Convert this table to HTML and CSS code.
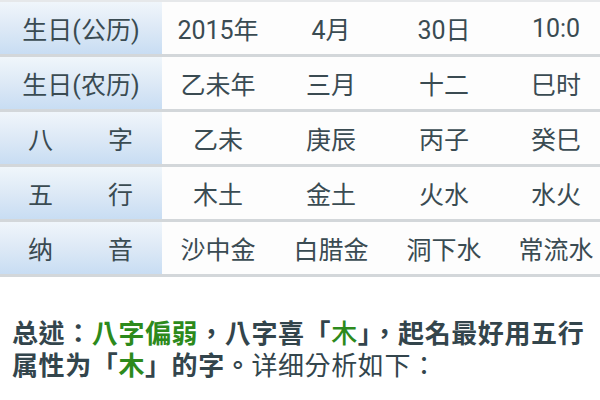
FILE: index.html
```html
<!DOCTYPE html>
<html lang="zh-CN">
<head>
<meta charset="utf-8">
<link rel="stylesheet" href="styles.css">
</head>
<body>
<div class="table">
  <div class="row">
    <div class="label">生日(公历)</div>
    <div class="cell">2015年</div>
    <div class="cell">4月</div>
    <div class="cell">30日</div>
    <div class="cell">10:0</div>
  </div>
  <div class="row">
    <div class="label">生日(农历)</div>
    <div class="cell">乙未年</div>
    <div class="cell">三月</div>
    <div class="cell">十二</div>
    <div class="cell">巳时</div>
  </div>
  <div class="row">
    <div class="label split"><span>八</span><span>字</span></div>
    <div class="cell">乙未</div>
    <div class="cell">庚辰</div>
    <div class="cell">丙子</div>
    <div class="cell">癸巳</div>
  </div>
  <div class="row">
    <div class="label split"><span>五</span><span>行</span></div>
    <div class="cell">木土</div>
    <div class="cell">金土</div>
    <div class="cell">火水</div>
    <div class="cell">水火</div>
  </div>
  <div class="row">
    <div class="label split"><span>纳</span><span>音</span></div>
    <div class="cell">沙中金</div>
    <div class="cell">白腊金</div>
    <div class="cell">洞下水</div>
    <div class="cell">常流水</div>
  </div>
</div>
<p class="summary" lang="zh-TW"><b>总述：<span class="green">八字偏弱</span>，八字喜「<span class="green light">木</span>」，起名最好用五行属性为「<span class="green">木</span>」的字。</b>详细分析如下：</p>
</body>
</html>
```

FILE: styles.css
```css
html, body {
  margin: 0;
  padding: 0;
  background: #ffffff;
  width: 600px;
  height: 400px;
  overflow: hidden;
}

body {
  font-family: Roboto, "Noto Sans CJK SC", sans-serif;
  color: #3a4b52;
}

.table {
  width: 600px;
  overflow: hidden;
  border-top: 2px solid #e6e8ea;
}

.row {
  display: grid;
  grid-template-columns: 162px 112px 114px 112px 112px;
  height: 52px;
  border-bottom: 3px solid #d3d7da;
}

.label {
  display: flex;
  align-items: center;
  justify-content: center;
  font-size: 25px;
  background: linear-gradient(to bottom, #f0f6fb 0%, #dde9f6 50%, #c8ddf3 100%);
}

.label.split {
  justify-content: space-between;
  padding: 0 29px 0 28px;
}

.cell {
  display: flex;
  align-items: center;
  justify-content: center;
  font-size: 25px;
  background: #fdfdfd;
  white-space: nowrap;
}

.summary {
  margin: 39px 0 0 0;
  padding: 0 0 0 12px;
  font-family: "Noto Sans CJK TC", "Noto Sans CJK SC", sans-serif;
  font-size: 26px;
  line-height: 32px;
  letter-spacing: 0.6px;
  color: #33454c;
}

.summary b {
  font-weight: 700;
}

.green {
  color: #2d8a1c;
}

.green.light {
  font-weight: 500;
}
```
